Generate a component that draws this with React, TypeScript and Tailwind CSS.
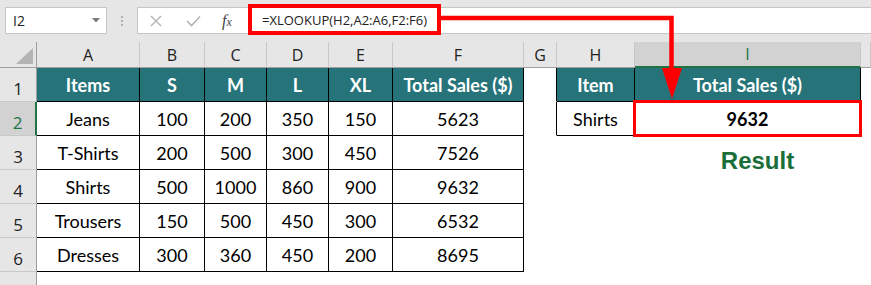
import React from 'react';

type Col = { key: string; w: string; label?: boolean };

const COLS: Col[] = [
  { key: 'A', w: 'w-[103px]' },
  { key: 'B', w: 'w-[65px]' },
  { key: 'C', w: 'w-[62px]' },
  { key: 'D', w: 'w-[62px]' },
  { key: 'E', w: 'w-[64px]' },
  { key: 'F', w: 'w-[131px]' },
  { key: 'G', w: 'w-[33px]' },
  { key: 'H', w: 'w-[78px]' },
  { key: 'I', w: 'w-[226px]' },
  // J is only a sliver at the window edge, its letter doesn't fit
  { key: 'J', w: 'flex-1', label: false },
];

const SALES = [
  ['Items', 'S', 'M', 'L', 'XL', 'Total Sales ($)'],
  ['Jeans', '100', '200', '350', '150', '5623'],
  ['T-Shirts', '200', '500', '300', '450', '7526'],
  ['Shirts', '500', '1000', '860', '900', '9632'],
  ['Trousers', '150', '500', '450', '300', '6532'],
  ['Dresses', '300', '360', '450', '200', '8695'],
];

const LOOKUP = [
  ['Item', 'Total Sales ($)'],
  ['Shirts', '9632'],
];

const SELECTED_ROW = 2;
const SELECTED_COL = 'I';

function cellContent(r: number, c: number): string {
  if (c <= 5 && r <= 6) return SALES[r - 1][c];
  if ((c === 7 || c === 8) && r <= 2) return LOOKUP[r - 1][c - 7];
  return '';
}

function Cell({ r, c }: { r: number; c: number }) {
  const inSales = c <= 5 && r <= 6;
  const inLookup = (c === 7 || c === 8) && r <= 2;
  const boxed = inSales || inLookup;
  const isHeader = r === 1 && boxed;
  // G1:G2 carries the left edge of the lookup table
  const rightEdge = boxed || (c === 6 && r <= 2);
  const text = cellContent(r, c);

  return (
    <div
      className={[
        COLS[c].w,
        'shrink-0 h-full flex items-center justify-center pt-[1px] border-r border-b text-[18px] whitespace-nowrap',
        rightEdge ? 'border-r-black' : 'border-r-white',
        boxed ? 'border-b-black' : 'border-b-white',
        isHeader ? 'bg-[#26747a] text-white font-bold' : 'bg-white text-black',
        r === 2 && c === 8 ? 'font-bold' : '',
      ].join(' ')}
    >
      {text}
      {r === 3 && c === 8 && (
        <span className="self-end ml-[20px] -mb-[4px] font-['Liberation_Sans',Arial,sans-serif] text-[24px] leading-none font-bold text-[#1a6e3a]">
          Result
        </span>
      )}
    </div>
  );
}

function RowHeader({ n }: { n: number }) {
  const sel = n === SELECTED_ROW;
  return (
    <div
      className={[
        'w-[37px] shrink-0 h-full flex items-end justify-center pb-[4px] border-b border-b-[#c8c8c8] text-[17px] leading-none',
        sel
          ? 'bg-[#d2d2d2] text-[#217346] border-r-2 border-r-[#217346]'
          : 'bg-[#e6e6e6] text-[#222] border-r border-r-[#9e9e9e]',
      ].join(' ')}
    >
      {n}
    </div>
  );
}

function Toolbar() {
  return (
    <div className="h-[42px] flex items-start bg-[#e6e6e6]">
      <div className="ml-[5px] mt-[7px] w-[102px] h-[27px] bg-white border border-[#c6c6c6] flex items-center justify-between pl-[7px] pr-[6px]">
        <span className="text-[14px] text-[#222]">I2</span>
        <svg width="8" height="5" viewBox="0 0 8 5">
          <path d="M0 0 H8 L4 4.5 Z" fill="#7a7a7a" />
        </svg>
      </div>
      <div className="ml-[14px] mt-[16px] flex flex-col gap-[2px]">
        <span className="w-[2px] h-[2px] bg-[#b0b0b0]" />
        <span className="w-[2px] h-[2px] bg-[#b0b0b0]" />
        <span className="w-[2px] h-[2px] bg-[#b0b0b0]" />
      </div>
      <div className="ml-[14px] mt-[7px] flex-1 h-[27px] bg-white border border-r-0 border-[#c6c6c6] flex items-center">
        <div className="w-[108px] shrink-0 flex items-center">
          <svg className="ml-[12px]" width="12" height="12" viewBox="0 0 12 12">
            <path d="M1 1 L11 11 M11 1 L1 11" stroke="#b4b4b4" strokeWidth="1.4" />
          </svg>
          <svg className="ml-[24px]" width="15" height="12" viewBox="0 0 15 12">
            <path d="M1 6 L5.5 10.5 L14 1.5" stroke="#b4b4b4" strokeWidth="1.6" fill="none" />
          </svg>
          <span className="ml-[21px] font-['Liberation_Serif',serif] italic text-[16px] text-[#444] leading-none">
            f<span className="text-[12px]">x</span>
          </span>
        </div>
        <span className="pl-[16px] text-[13px] text-[#222] whitespace-nowrap">=XLOOKUP(H2,A2:A6,F2:F6)</span>
      </div>
    </div>
  );
}

function ColumnHeaders() {
  return (
    <div className="h-[26px] flex bg-[#e6e6e6]">
      <div className="w-[37px] shrink-0 h-full border-r border-b border-r-[#9e9e9e] border-b-[#9e9e9e] flex items-end justify-end pr-[3px] pb-[3px]">
        <svg width="17" height="16" viewBox="0 0 17 16">
          <path d="M17 0 V16 H0 Z" fill="#b4b4b4" />
        </svg>
      </div>
      {COLS.map((col) => {
        const sel = col.key === SELECTED_COL;
        return (
          <div
            key={col.key}
            className={[
              col.w,
              'shrink-0 h-full flex items-center justify-center border-r border-r-[#c8c8c8] text-[16px]',
              sel
                ? 'bg-[#d2d2d2] text-[#217346] border-b-2 border-b-[#217346]'
                : 'text-[#222] border-b border-b-[#9e9e9e]',
            ].join(' ')}
          >
            {col.label === false ? '' : col.key}
          </div>
        );
      })}
    </div>
  );
}

export default function App() {
  const rows = [1, 2, 3, 4, 5, 6, 7];
  return (
    <div className="relative w-[871px] h-[285px] overflow-hidden bg-white font-['Open_Sans',sans-serif]">
      <Toolbar />
      <ColumnHeaders />
      {rows.map((r) => (
        <div key={r} className="h-[34px] flex">
          <RowHeader n={r} />
          <div className="flex flex-1 font-[Lato,sans-serif]">
            {COLS.map((col, c) => (
              <Cell key={col.key} r={r} c={c} />
            ))}
          </div>
        </div>
      ))}

      {/* callouts drawn on top of the sheet */}
      <div className="absolute left-[248px] top-[4px] w-[193px] h-[31px] border-4 border-[#ff0000]" />
      <div className="absolute left-[633px] top-[100px] w-[229px] h-[37px] border-[3px] border-[#ff0000]" />
      <svg className="absolute left-0 top-0 pointer-events-none" width="871" height="285">
        <polyline points="441,18 671.5,18 671.5,70" stroke="#ff0000" strokeWidth="4.5" fill="none" />
        <polygon points="662,68 682,68 672,99" fill="#ff0000" />
      </svg>
    </div>
  );
}
